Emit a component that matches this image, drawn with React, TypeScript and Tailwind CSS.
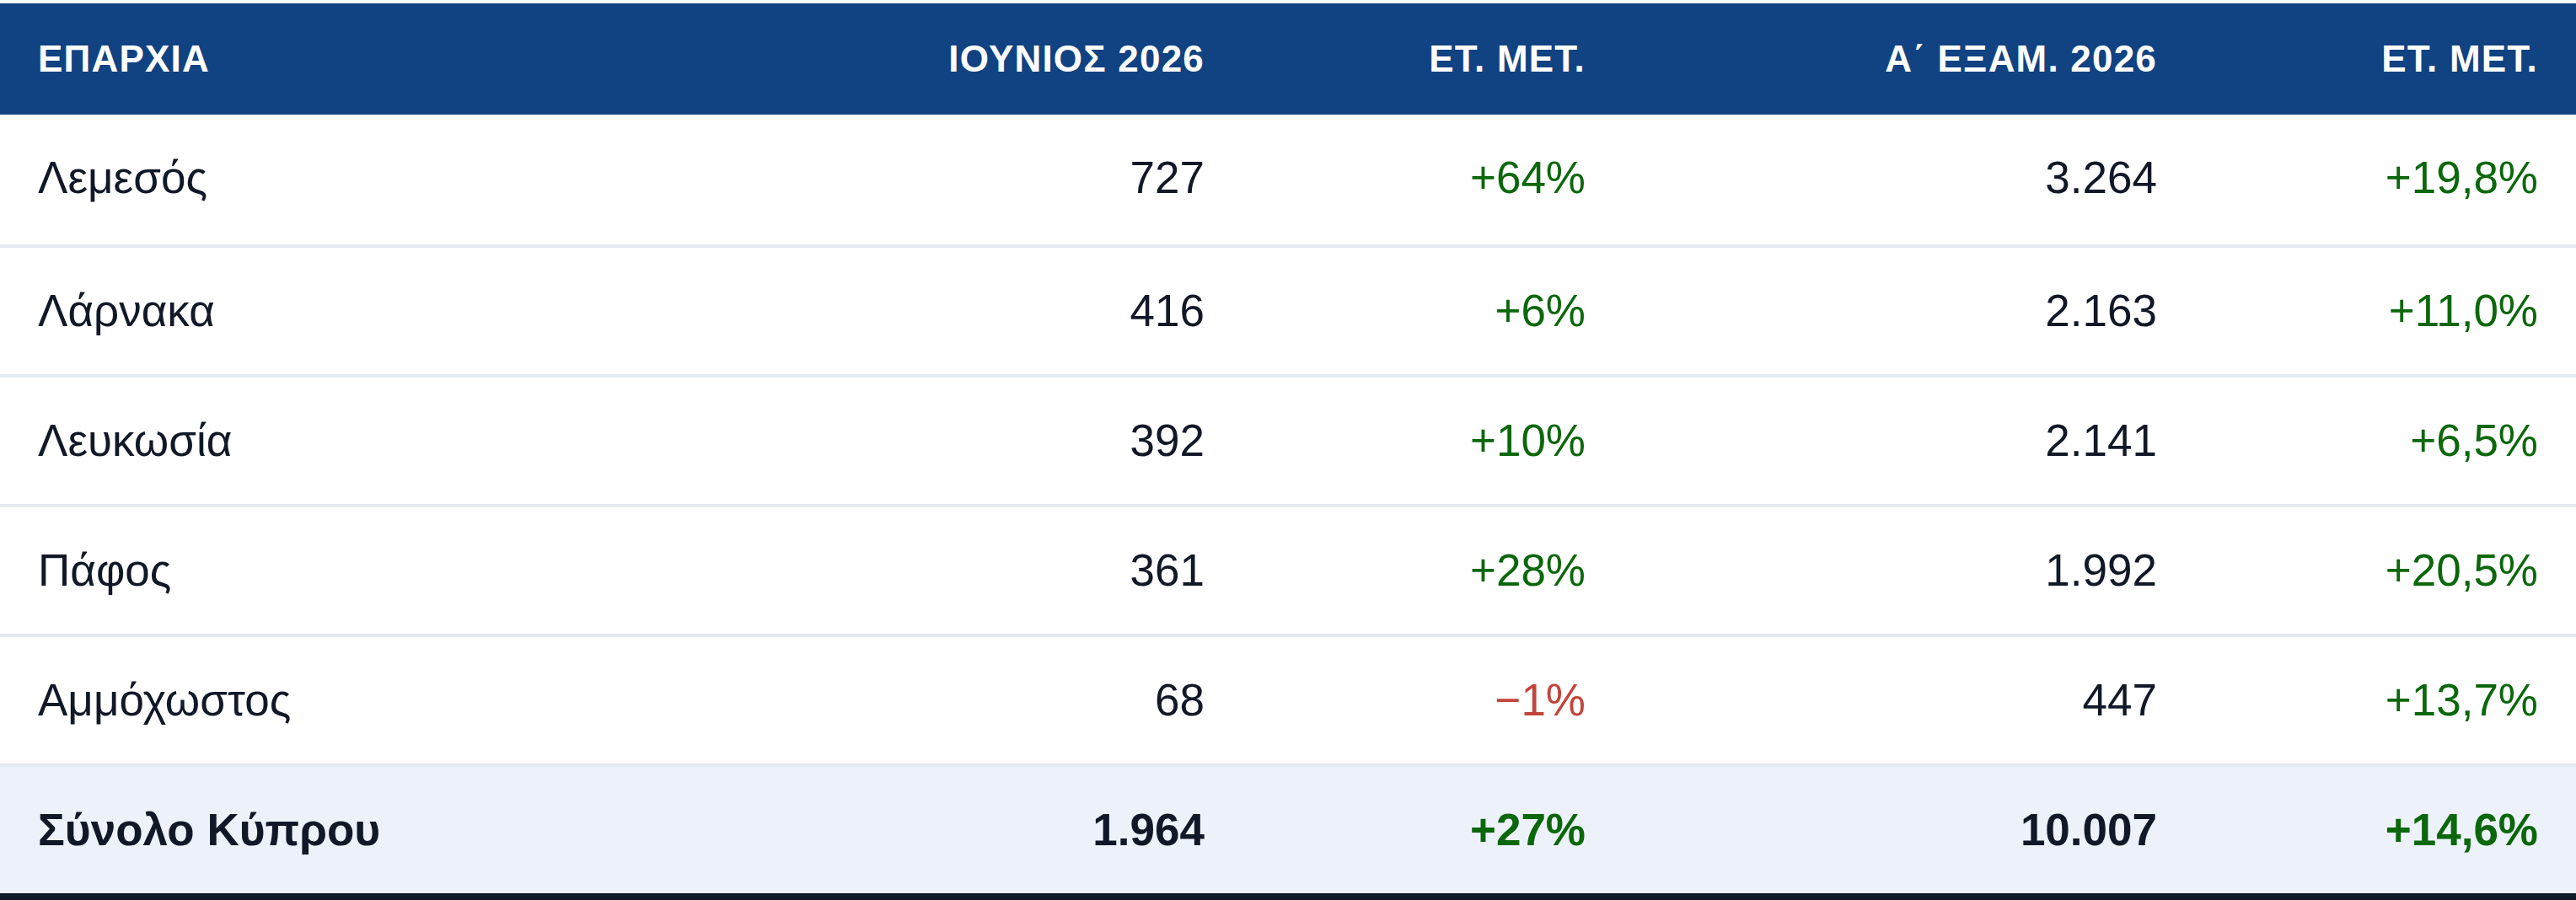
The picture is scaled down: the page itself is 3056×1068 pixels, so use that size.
const rows = [
  { name: 'Λεμεσός', june: '727', juneYoy: '+64%', half: '3.264', halfYoy: '+19,8%' },
  { name: 'Λάρνακα', june: '416', juneYoy: '+6%', half: '2.163', halfYoy: '+11,0%' },
  { name: 'Λευκωσία', june: '392', juneYoy: '+10%', half: '2.141', halfYoy: '+6,5%' },
  { name: 'Πάφος', june: '361', juneYoy: '+28%', half: '1.992', halfYoy: '+20,5%' },
  { name: 'Αμμόχωστος', june: '68', juneYoy: '−1%', half: '447', halfYoy: '+13,7%' },
]

const cols = 'grid grid-cols-[1022px_452px_452px_678px_452px]'

function Change({ value, bold }: { value: string; bold?: boolean }) {
  const neg = value.startsWith('−')
  return (
    <div className={`px-[45px] text-right ${neg ? 'text-[#c2453b]' : 'text-[#0b670b]'} ${bold ? 'font-bold' : ''}`}>
      {value}
    </div>
  )
}

export default function App() {
  return (
    <div className="w-[3056px] bg-white pt-1 font-['Liberation_Sans',Arial,sans-serif] text-[#111827]">
      <div className={`${cols} h-[132px] items-center bg-[#114281] text-[44px] font-bold uppercase tracking-[1.2px] text-white`}>
        <div className="px-[45px]">ΕΠΑΡΧΙΑ</div>
        <div className="px-[45px] text-right">ΙΟΥΝΙΟΣ 2026</div>
        <div className="px-[45px] text-right">ΕΤ. ΜΕΤ.</div>
        <div className="px-[45px] text-right">Α΄ ΕΞΑΜ. 2026</div>
        <div className="px-[45px] text-right">ΕΤ. ΜΕΤ.</div>
      </div>

      {rows.map((r, i) => (
        <div
          key={r.name}
          className={`${cols} h-[154px] items-center text-[53px] ${i > 0 ? 'border-t-4 border-[#e5e9f1]' : 'pb-1'}`}
        >
          <div className="px-[45px]">{r.name}</div>
          <div className="px-[45px] text-right">{r.june}</div>
          <Change value={r.juneYoy} />
          <div className="px-[45px] text-right">{r.half}</div>
          <Change value={r.halfYoy} />
        </div>
      ))}

      <div className={`${cols} h-[154px] items-center border-t-4 border-[#e5e9f1] bg-[#edf2fa] text-[53px] font-bold`}>
        <div className="px-[45px]">Σύνολο Κύπρου</div>
        <div className="px-[45px] text-right">1.964</div>
        <Change value="+27%" bold />
        <div className="px-[45px] text-right">10.007</div>
        <Change value="+14,6%" bold />
      </div>

      <div className="h-2 bg-[#111827]" />
    </div>
  )
}
